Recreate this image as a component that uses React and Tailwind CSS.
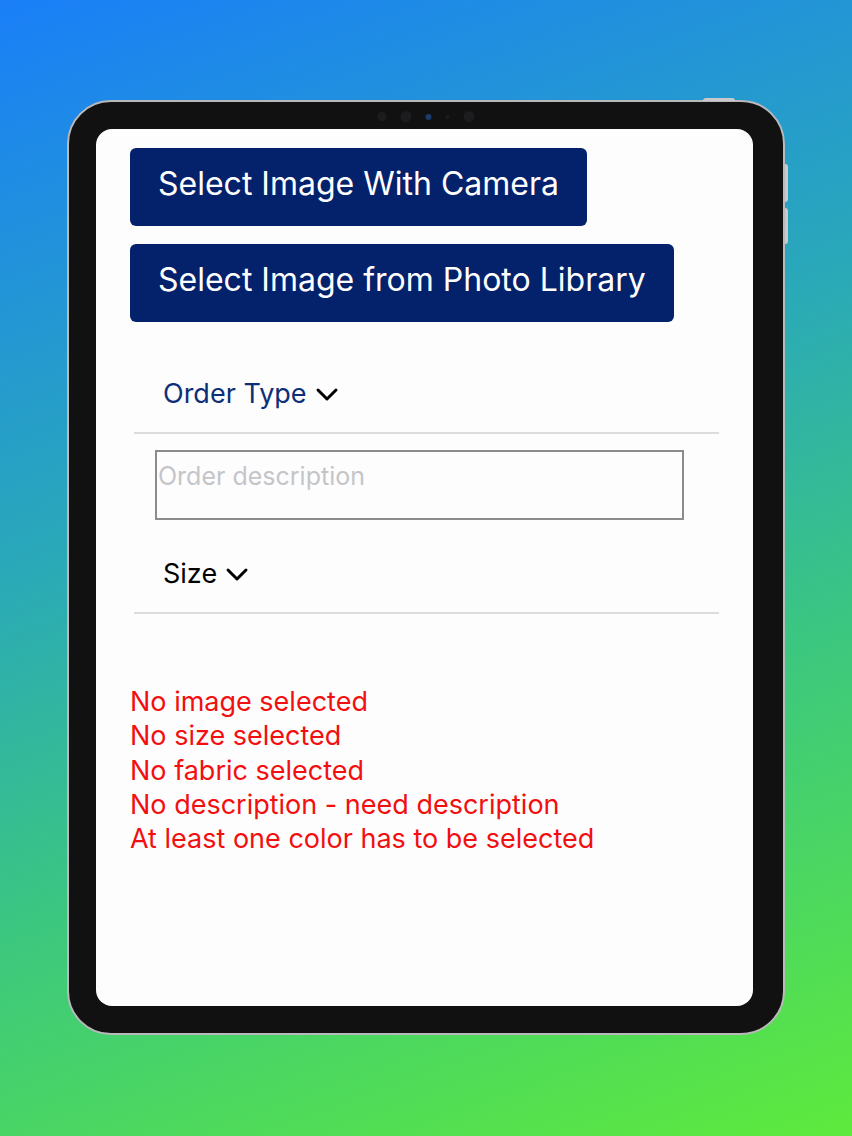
import React from 'react';

const errors = [
  'No image selected',
  'No size selected',
  'No fabric selected',
  'No description - need description',
  'At least one color has to be selected',
];

function Chevron() {
  return (
    <svg width="24" height="16" viewBox="0 0 24 16" fill="none" stroke="#000" strokeWidth="3" strokeLinecap="round" strokeLinejoin="round">
      <path d="M3 4l9 9 9-9" />
    </svg>
  );
}

function Picker({ label, color, height }) {
  return (
    <div className={`ml-[4px] w-[585px] ${height} flex items-end border-b-2 border-[#dcdcdc]`}>
      <div className="flex items-center gap-[8px] pl-[29px] pb-[22px]">
        <span className={`text-[27px] leading-[32px] ${color}`}>{label}</span>
        <Chevron />
      </div>
    </div>
  );
}

export default function App() {
  return (
    <div className="min-h-screen w-full bg-[linear-gradient(160deg,#1a7ff8_0%,#2aa9b8_40%,#3cc77f_65%,#5eea3c_100%)] pt-[100px] font-['Inter',sans-serif]">
      <div className="relative mx-auto w-[718px] h-[935px] rounded-[44px] bg-[#111112] border-2 border-[#b9b9bb] py-[27px] pl-[27px] pr-[30px]">
        {/* camera + sensors */}
        <div className="absolute top-[9px] left-1/2 -translate-x-1/2 flex items-center gap-[14px]">
          <span className="w-[9px] h-[9px] rounded-full bg-[#1c1c1f]" />
          <span className="w-[11px] h-[11px] rounded-full bg-[#1c1c1f]" />
          <span className="w-[6px] h-[6px] rounded-full bg-[#1e3c6a]" />
          <span className="w-[4px] h-[4px] rounded-full bg-[#1c1c1f]" />
          <span className="w-[11px] h-[11px] rounded-full bg-[#1c1c1f]" />
        </div>
        {/* hardware buttons */}
        <div className="absolute -top-[4px] right-[48px] w-[32px] h-[3px] rounded-t bg-[#c9c9cc]" />
        <div className="absolute top-[62px] -right-[5px] w-[3px] h-[38px] rounded-r bg-[#c9c9cc]" />
        <div className="absolute top-[106px] -right-[5px] w-[3px] h-[36px] rounded-r bg-[#c9c9cc]" />

        <div className="w-full h-full rounded-[16px] bg-[#fdfdfe] overflow-hidden pt-[19px] pl-[34px]">
          <div className="flex flex-col items-start gap-[18px]">
            <button className="h-[78px] px-[28px] pb-[6px] rounded-[6px] bg-[#03226b] text-white text-[32px]">
              Select Image With Camera
            </button>
            <button className="h-[78px] px-[28px] pb-[6px] rounded-[6px] bg-[#03226b] text-white text-[32px]">
              Select Image from Photo Library
            </button>
          </div>

          <Picker label="Order Type" color="text-[#0c2f78]" height="h-[112px]" />

          <div className="ml-[25px] mt-[16px] w-[529px] h-[70px] border-2 border-[#8c8c8e] px-[1px] pt-[9px]">
            <span className="text-[25px] leading-[30px] text-[#c5c5c9]">Order description</span>
          </div>

          <Picker label="Size" color="text-black" height="h-[94px]" />

          <div className="mt-[71px] flex flex-col text-[27px] leading-[34.3px] text-[#f20f0f]">
            {errors.map((e) => (
              <span key={e}>{e}</span>
            ))}
          </div>
        </div>
      </div>
    </div>
  );
}
